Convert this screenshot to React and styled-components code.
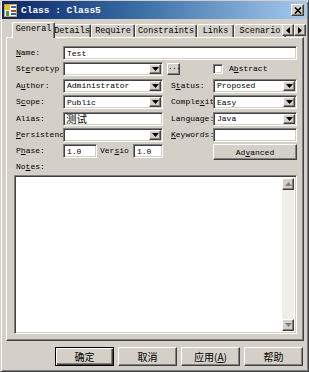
import React from 'react';
import styled, { createGlobalStyle } from 'styled-components';

const GlobalStyle = createGlobalStyle`
  html, body { margin: 0; padding: 0; background: #d4d0c8; }
  * { box-sizing: border-box; }
`;

const mono = `"Liberation Mono", "DejaVu Sans Mono", monospace`;
const cjk = `"Noto Sans CJK SC", "Liberation Sans", sans-serif`;

const raised = `
  border: 1px solid;
  border-color: #fff #404040 #404040 #fff;
  box-shadow: inset -1px -1px #808080, inset 1px 1px #d4d0c8;
`;

const sunken = `
  border: 1px solid;
  border-color: #808080 #fff #fff #808080;
  box-shadow: inset 1px 1px #404040, inset -1px -1px #d4d0c8;
`;

const Window = styled.div`
  width: 309px;
  height: 372px;
  display: flex;
  flex-direction: column;
  background: #d4d0c8;
  border: 1px solid;
  border-color: #d4d0c8 #404040 #404040 #d4d0c8;
  box-shadow: inset 1px 1px #fff, inset -1px -1px #808080;
  overflow: hidden;
`;

const TitleBar = styled.div`
  height: 18px;
  margin: 0 1px;
  display: flex;
  align-items: center;
  gap: 4px;
  padding: 0 3px 0 2px;
  background: linear-gradient(90deg, #0a246a 0%, #3a6ea5 45%, #a6caf0 100%);
`;

const Title = styled.span`
  color: #fff;
  font: bold 9.5px ${mono};
`;

const CloseBtn = styled.div`
  margin-left: auto;
  width: 13px;
  height: 12px;
  ${raised}
  background: #d4d0c8;
  display: flex;
  align-items: center;
  justify-content: center;
`;

const Body = styled.div`
  flex: 1;
  display: flex;
  flex-direction: column;
  padding: 3px 4px 0 5px;
`;

const TabStrip = styled.div`
  position: relative;
  height: 15px;
  display: flex;
  align-items: flex-end;
  padding-left: 8px;
  z-index: 1;
`;

const Tab = styled.div`
  flex: none;
  width: ${(p) => p.w}px;
  height: ${(p) => (p.active ? 16 : 13)}px;
  margin: 0 ${(p) => (p.active ? -2 : 0)}px ${(p) => (p.active ? -1 : 0)}px;
  position: relative;
  z-index: ${(p) => (p.active ? 2 : 1)};
  background: #d4d0c8;
  border-top: 1px solid #fff;
  border-left: 1px solid #fff;
  border-right: 1px solid #404040;
  box-shadow: inset -1px 0 #808080;
  border-radius: 2px 2px 0 0;
  font: 8.5px ${mono};
  color: #000;
  line-height: ${(p) => (p.active ? 13 : 12)}px;
  text-align: center;
  white-space: nowrap;
  overflow: hidden;
`;

const TabArrows = styled.div`
  position: absolute;
  right: -2px;
  top: 2px;
  display: flex;
  background: #d4d0c8;
  z-index: 3;
`;

const ArrowBtn = styled.div`
  width: 12px;
  height: 12px;
  ${raised}
  background: #d4d0c8;
  display: flex;
  align-items: center;
  justify-content: center;
`;

const Panel = styled.div`
  flex: 1;
  display: flex;
  flex-direction: column;
  ${raised}
  padding: 8px 4px 6px 9px;
`;

const Form = styled.div`
  display: grid;
  grid-template-columns: 47px 100px 8px 42px 84px;
  grid-auto-rows: 14px;
  row-gap: 2.4px;
  align-items: center;
`;

const Label = styled.div`
  grid-column: ${(p) => p.col || 'auto'};
  width: ${(p) => (p.w ? `${p.w}px` : 'auto')};
  padding-left: ${(p) => p.pl || 0}px;
  font: 8px ${mono};
  color: #000;
  line-height: 14px;
  white-space: nowrap;
`;

const Field = styled.div`
  grid-column: ${(p) => p.span || 'auto'};
  position: relative;
  width: ${(p) => (p.w ? `${p.w}px` : 'auto')};
  height: 14px;
  ${sunken}
  background: #fff;
  display: flex;
  align-items: center;
  font: 8px ${mono};
  color: #000;
  padding-left: 3px;
  white-space: nowrap;
  overflow: hidden;
`;

const CjkText = styled.span`
  font: 10.5px ${cjk};
  line-height: 10px;
  margin-left: -1px;
`;

const FieldText = styled.span`
  flex: 1;
  overflow: hidden;
`;

const DropBtn = styled.div`
  flex: none;
  width: 12px;
  height: 10px;
  margin-right: 1px;
  ${raised}
  background: #d4d0c8;
  display: flex;
  align-items: center;
  justify-content: center;
`;

const SmallBtn = styled.div`
  margin-left: 4px;
  width: 13px;
  height: 12px;
  ${raised}
  background: #d4d0c8;
  font: 7px ${mono};
  line-height: 7px;
  text-align: center;
  color: #000;
`;

const Cell = styled.div`
  grid-column: ${(p) => p.col};
  display: flex;
  align-items: center;
  gap: ${(p) => p.gap || 0}px;
  height: 14px;
`;

const Check = styled.div`
  width: 10px;
  height: 10px;
  ${sunken}
  background: #fff;
`;

const PushBtn = styled.div`
  grid-column: ${(p) => p.col || 'auto'};
  align-self: start;
  height: ${(p) => p.h || 16}px;
  width: ${(p) => (p.w ? `${p.w}px` : 'auto')};
  ${raised}
  background: #d4d0c8;
  display: flex;
  align-items: center;
  justify-content: center;
  font: ${(p) => (p.cjk ? `10px ${cjk}` : `8px ${mono}`)};
  color: #000;
  ${(p) =>
    p.primary &&
    `border-color: #000;
     box-shadow: inset 1px 1px #fff, inset -1px -1px #404040, inset -2px -2px #808080;`}
`;

const NotesLabel = styled.div`
  margin-top: 4px;
  font: 8px ${mono};
  line-height: 10px;
  color: #000;
`;

const Notes = styled.div`
  flex: 1;
  margin: 3px 0 0 -2px;
  width: 283px;
  ${sunken}
  background: #fff;
  display: flex;
  justify-content: flex-end;
  padding: 2px;
`;

const ScrollBar = styled.div`
  width: 12px;
  display: flex;
  flex-direction: column;
  background: #efeeea;
`;

const ScrollTrack = styled.div`
  flex: 1;
`;

const Footer = styled.div`
  height: 30px;
  display: flex;
  justify-content: flex-end;
  gap: 4px;
  padding: 6px 5px 0 0;
`;

const U = styled.span`
  text-decoration: underline;
  text-underline-offset: 1px;
`;

const Down = ({ color = '#000' }) => (
  <svg width="7" height="4" viewBox="0 0 7 4">
    <path d="M0 0h7L3.5 4z" fill={color} />
  </svg>
);

const Up = () => (
  <svg width="7" height="4" viewBox="0 0 7 4">
    <path d="M0 4h7L3.5 0z" fill="#808080" />
  </svg>
);

const Combo = ({ value, span }) => (
  <Field span={span}>
    <FieldText>{value}</FieldText>
    <DropBtn>
      <Down />
    </DropBtn>
  </Field>
);

const tabs = [
  { name: 'General', w: 43, active: true },
  { name: 'Details', w: 38 },
  { name: 'Require', w: 44 },
  { name: 'Constraints', w: 62 },
  { name: 'Links', w: 37 },
  { name: 'Scenario', w: 52 },
];

const AppIcon = () => (
  <svg width="13" height="13" viewBox="0 0 13 13">
    <rect x="0.5" y="0.5" width="12" height="12" fill="#fff" stroke="#c8a040" />
    <rect x="1" y="1" width="5" height="5" fill="#f0c020" />
    <rect x="7" y="2" width="5" height="2" fill="#3060c0" />
    <rect x="2" y="7" width="3" height="5" fill="#40a040" />
    <rect x="7" y="6" width="5" height="2" fill="#d04020" />
    <rect x="7" y="9" width="5" height="2" fill="#3060c0" />
  </svg>
);

export default function App() {
  return (
    <>
      <GlobalStyle />
      <Window>
        <TitleBar>
          <AppIcon />
          <Title>Class : Class5</Title>
          <CloseBtn>
            <svg width="8" height="7" viewBox="0 0 8 7">
              <path d="M1 0.5l6 6M7 0.5l-6 6" stroke="#000" strokeWidth="1.6" />
            </svg>
          </CloseBtn>
        </TitleBar>
        <Body>
          <TabStrip>
            {tabs.map((t) => (
              <Tab key={t.name} w={t.w} active={t.active}>
                {t.name}
              </Tab>
            ))}
            <TabArrows>
              <ArrowBtn>
                <svg width="4" height="7" viewBox="0 0 4 7">
                  <path d="M4 0v7L0 3.5z" fill="#000" />
                </svg>
              </ArrowBtn>
              <ArrowBtn>
                <svg width="4" height="7" viewBox="0 0 4 7">
                  <path d="M0 0v7L4 3.5z" fill="#000" />
                </svg>
              </ArrowBtn>
            </TabArrows>
          </TabStrip>
          <Panel>
            <Form>
              <Label><U>N</U>ame:</Label>
              <Field span="2 / 6">Test</Field>

              <Label>St<U>e</U>reotyp</Label>
              <Combo value="" />
              <Cell col="3 / 5">
                <SmallBtn>...</SmallBtn>
              </Cell>
              <Cell col="5" gap={6}>
                <Check />
                <Label>A<U>b</U>stract</Label>
              </Cell>

              <Label>A<U>u</U>thor:</Label>
              <Combo value="Administrator" />
              <Label col="4">S<U>t</U>atus:</Label>
              <Combo value="Proposed" />

              <Label>S<U>c</U>ope:</Label>
              <Combo value="Public" />
              <Label col="4">Comple<U>x</U>it</Label>
              <Combo value="Easy" />

              <Label>Alias:</Label>
              <Field><CjkText>测试</CjkText></Field>
              <Label col="4">Lan<U>g</U>uage:</Label>
              <Combo value="Java" />

              <Label><U>P</U>ersistenc</Label>
              <Combo value="" />
              <Label col="4"><U>K</U>eywords:</Label>
              <Field />

              <Label>P<U>h</U>ase:</Label>
              <Cell col="2" gap={0}>
                <Field w={34}>1.0</Field>
                <Label w={36} pl={3}>Ver<U>s</U>io</Label>
                <Field w={30}>1.0</Field>
              </Cell>
              <PushBtn col="5">Ad<U>v</U>anced</PushBtn>
            </Form>
            <NotesLabel>No<U>t</U>es:</NotesLabel>
            <Notes>
              <ScrollBar>
                <ArrowBtn>
                  <Up />
                </ArrowBtn>
                <ScrollTrack />
                <ArrowBtn>
                  <Down color="#808080" />
                </ArrowBtn>
              </ScrollBar>
            </Notes>
          </Panel>
        </Body>
        <Footer>
          <PushBtn cjk primary w={59} h={19}>确定</PushBtn>
          <PushBtn cjk w={59} h={19}>取消</PushBtn>
          <PushBtn cjk w={59} h={19}>应用(<U>A</U>)</PushBtn>
          <PushBtn cjk w={59} h={19}>帮助</PushBtn>
        </Footer>
      </Window>
    </>
  );
}
